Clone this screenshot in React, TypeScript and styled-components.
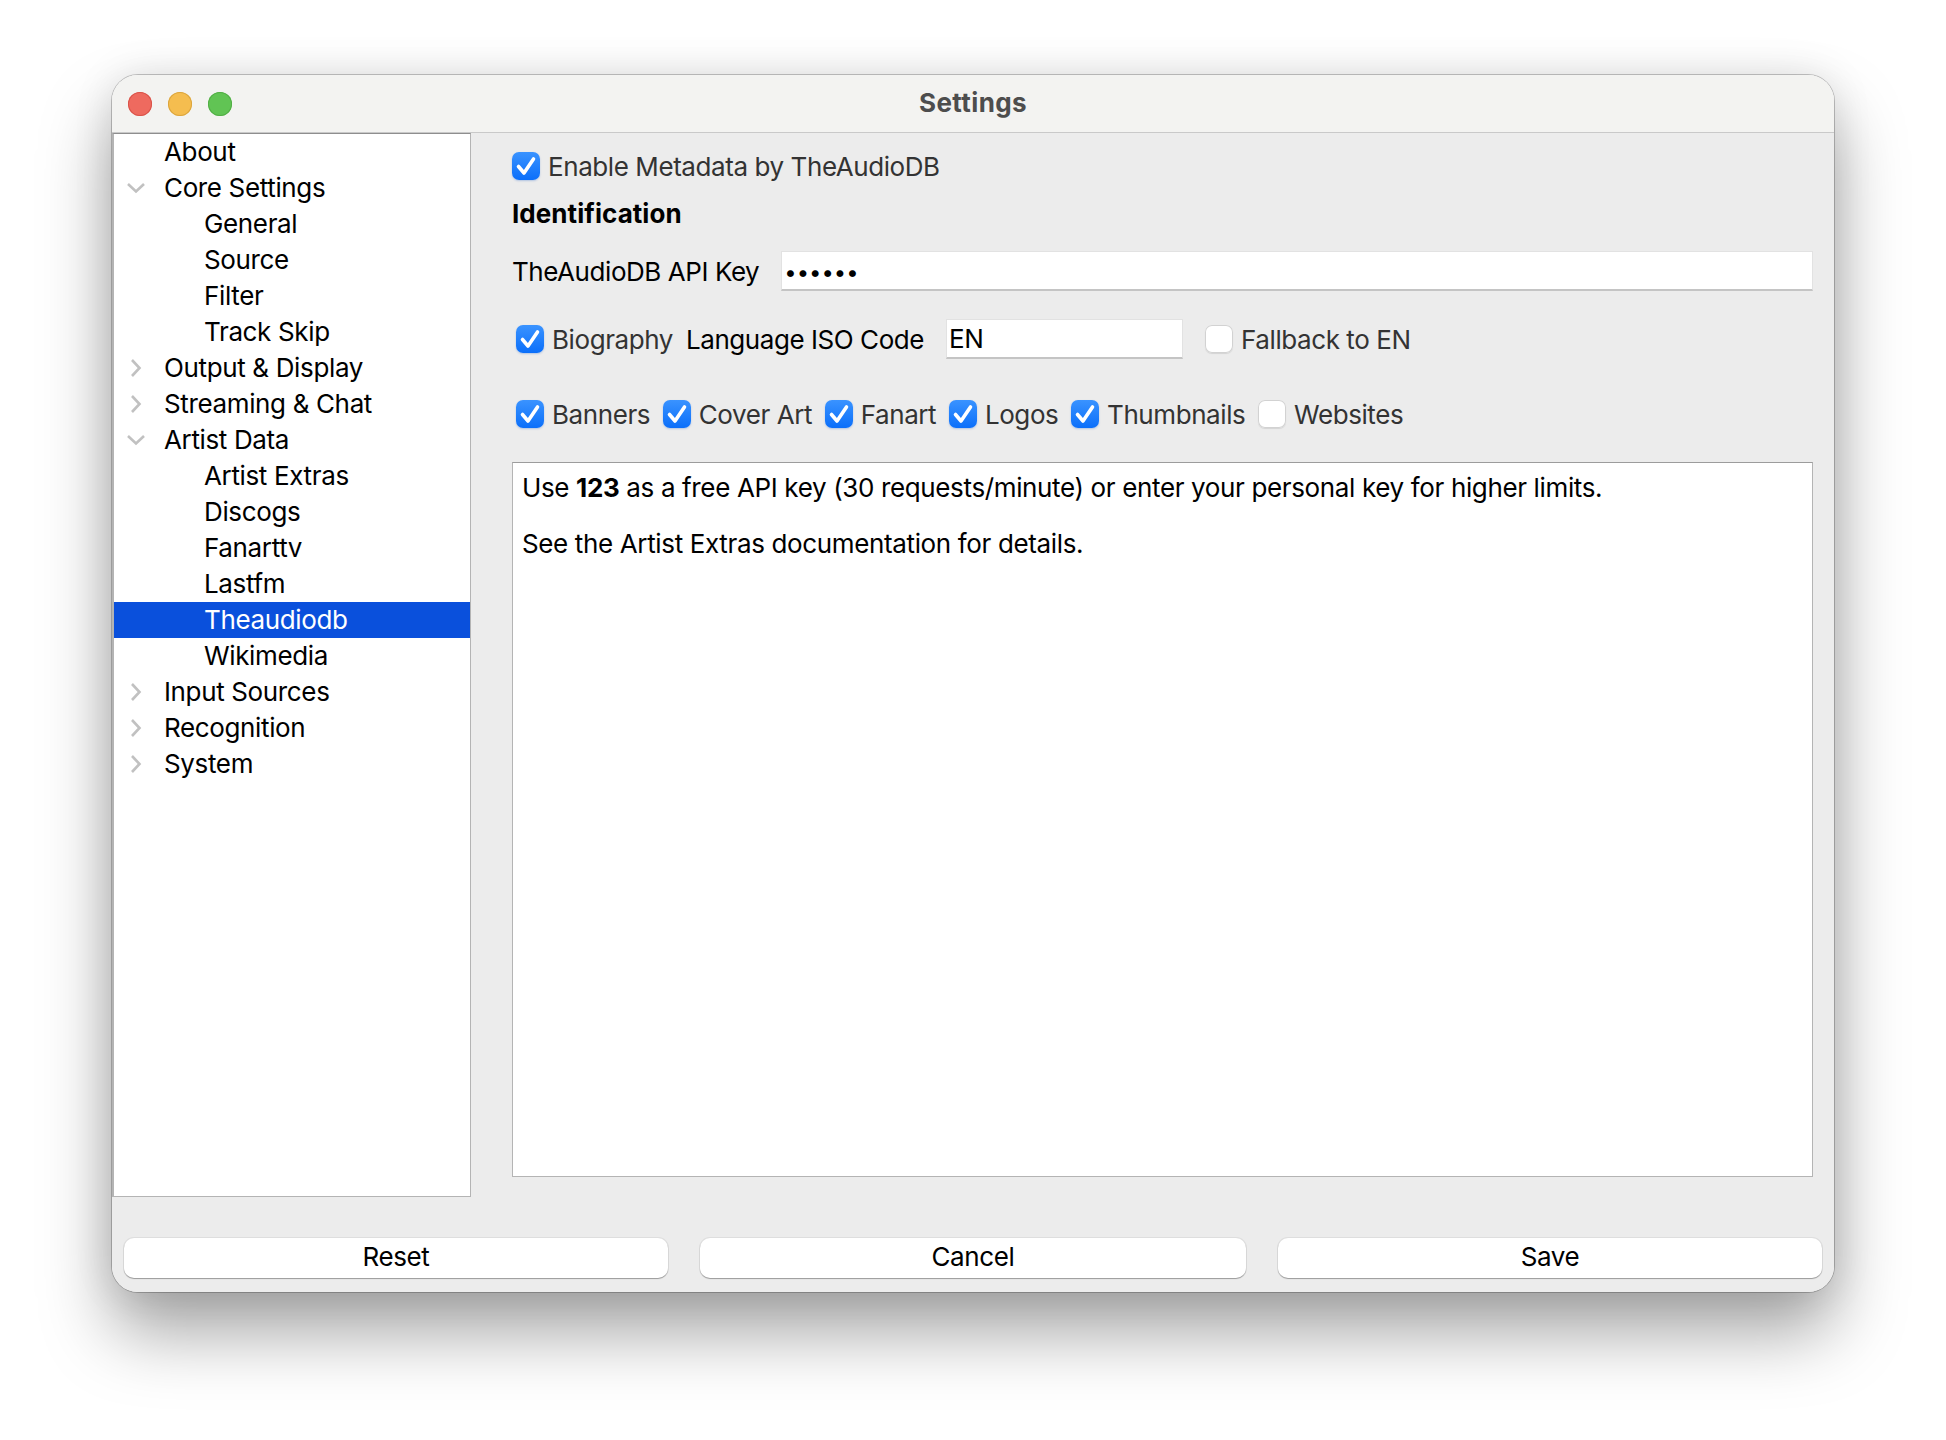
import styled, { createGlobalStyle } from "styled-components";

const GlobalStyle = createGlobalStyle`
  html, body {
    margin: 0;
    padding: 0;
    background: #ffffff;
  }
  body {
    font-family: Inter, "Liberation Sans", sans-serif;
    font-size: 26px;
    color: #000;
  }
`;

const Page = styled.div`
  width: 1946px;
  height: 1440px;
  padding: 75px 0 0 112px;
  box-sizing: border-box;
  overflow: hidden;
`;

const Window = styled.div`
  width: 1722px;
  height: 1217px;
  display: flex;
  flex-direction: column;
  background: #ececec;
  border-radius: 26px;
  box-sizing: border-box;
  overflow: hidden;
`;

const WindowShadow = styled.div`
  width: 1722px;
  height: 1217px;
  border-radius: 26px;
  box-shadow: 0 0 0 1px rgba(0, 0, 0, 0.22), 0 40px 70px rgba(0, 0, 0, 0.36),
    0 0 40px rgba(0, 0, 0, 0.1);
`;

const TitleBar = styled.div`
  height: 57px;
  flex: none;
  display: flex;
  align-items: center;
  position: relative;
  background: #f3f3f1;
  border-bottom: 1px solid #c9c9c9;
  padding-left: 16px;
  gap: 16px;
`;

const Light = styled.span<{ $color: string; $edge: string }>`
  width: 24px;
  height: 24px;
  border-radius: 50%;
  background: ${(p) => p.$color};
  box-shadow: inset 0 0 0 1px ${(p) => p.$edge};
`;

const Title = styled.div`
  position: absolute;
  left: 0;
  right: 0;
  top: 12px;
  text-align: center;
  font-size: 26px;
  line-height: 32px;
  font-weight: 700;
  color: #4d4d4d;
  letter-spacing: 0.4px;
`;

const Main = styled.div`
  display: flex;
  height: 1064px;
  flex: none;
`;

const Tree = styled.div`
  width: 359px;
  flex: none;
  box-sizing: border-box;
  background: #fff;
  border: 1px solid #b4b4b4;
  border-left: 2px solid #b4b4b4;
  border-top: 1px solid #8e8e8e;
`;

const TreeRow = styled.div<{ $depth: number; $selected?: boolean }>`
  height: 36px;
  box-sizing: border-box;
  padding-bottom: 2px;
  display: flex;
  align-items: center;
  position: relative;
  padding-left: ${(p) => (p.$depth === 0 ? 50 : 90)}px;
  background: ${(p) => (p.$selected ? "#0a50dc" : "transparent")};
  color: ${(p) => (p.$selected ? "#fff" : "#000")};
  letter-spacing: -0.36px;
`;

const Arrow = styled.svg`
  position: absolute;
  left: 12px;
  top: 8px;
  width: 20px;
  height: 20px;
  fill: none;
  stroke: #c1c1c1;
  stroke-width: 2.6;
`;

const Panel = styled.div`
  flex: 1;
  padding: 19px 21px 0 41px;
  display: flex;
  flex-direction: column;
  align-items: stretch;
  min-width: 0;
`;

const CheckRow = styled.div`
  display: flex;
  align-items: center;
  height: 28px;
`;

const Heading = styled.div`
  margin-top: 18px;
  height: 32px;
  line-height: 32px;
  font-weight: 700;
  letter-spacing: 0.06px;
`;

const KeyRow = styled.div`
  margin-top: 21px;
  display: flex;
  align-items: center;
  height: 40px;
  gap: 22px;
`;

const Plain = styled.span`
  letter-spacing: -0.44px;
  white-space: nowrap;
`;

const Field = styled.div<{ $width?: number }>`
  flex: ${(p) => (p.$width ? "none" : 1)};
  width: ${(p) => (p.$width ? `${p.$width}px` : "auto")};
  height: 40px;
  box-sizing: border-box;
  background: #fff;
  border-bottom: 2px solid #c4c4c4;
  border-top: 1px solid #e2e2e2;
  border-left: 1px solid #e2e2e2;
  border-right: 1px solid #e2e2e2;
  padding-left: 2px;
  display: flex;
  align-items: center;
  letter-spacing: -0.38px;
`;

const Dots = styled.span`
  font-size: 22px;
  line-height: 1;
  letter-spacing: 0;
  padding-top: 2px;
`;

const LangRow = styled.div`
  margin-top: 28px;
  display: flex;
  align-items: center;
  height: 40px;
  padding-left: 4px;
`;

const LangLabel = styled(Plain)`
  margin: 0 22px 0 13px;
`;

const LangField = styled(Field)`
  margin-right: 22px;
`;

const BoxRow = styled.div`
  margin-top: 41px;
  display: flex;
  align-items: center;
  height: 28px;
  padding-left: 4px;
  gap: 12.7px;
`;

const Check = styled.label`
  display: inline-flex;
  align-items: center;
  gap: 8px;
  color: #333;
  letter-spacing: -0.42px;
  white-space: nowrap;
`;

const Box = styled.span<{ $on?: boolean }>`
  width: 28px;
  height: 28px;
  flex: none;
  box-sizing: border-box;
  border-radius: 7px;
  display: flex;
  align-items: center;
  justify-content: center;
  background: ${(p) =>
    p.$on ? "linear-gradient(#3a93ff, #0b6ffa)" : "#fff"};
  box-shadow: ${(p) =>
    p.$on
      ? "0 1px 2px rgba(0, 80, 200, 0.25)"
      : "inset 0 0 0 1px #d2d2d2, 0 1px 1px rgba(0, 0, 0, 0.1)"};
`;

const Docs = styled.div`
  margin-top: 34px;
  height: 715px;
  box-sizing: border-box;
  background: #fff;
  border: 1px solid #b4b4b4;
  border-top: 1px solid #9c9c9c;
  padding: 9px 9px;
  line-height: 31px;
  letter-spacing: -0.36px;
  p {
    margin: 0 0 25px;
  }
`;

const Footer = styled.div`
  flex: 1;
  display: grid;
  grid-template-columns: 544px 546px 544px;
  column-gap: 32px;
  padding: 41px 12px 0 12px;
`;

const Button = styled.button`
  height: 40px;
  border: none;
  border-radius: 10px;
  background: #fff;
  font: inherit;
  font-size: 26px;
  color: #000;
  letter-spacing: -0.38px;
  padding: 0 0 3px;
  box-shadow: 0 0 0 1px rgba(0, 0, 0, 0.06), 0 1px 1px rgba(0, 0, 0, 0.3);
`;

const Tick = () => (
  <svg width="26" height="26" viewBox="0 0 26 26" fill="none">
    <path d="M5.5 13.5 L11 20 L20.5 6" stroke="#fff" strokeWidth="3.6" strokeLinecap="round" strokeLinejoin="round" />
  </svg>
);

const Option = ({ label, on = true }: { label: string; on?: boolean }) => (
  <Check>
    <Box $on={on}>{on && <Tick />}</Box>
    {label}
  </Check>
);

type Item = { label: string; depth: number; arrow?: "open" | "closed"; selected?: boolean };

const items: Item[] = [
  { label: "About", depth: 0 },
  { label: "Core Settings", depth: 0, arrow: "open" },
  { label: "General", depth: 1 },
  { label: "Source", depth: 1 },
  { label: "Filter", depth: 1 },
  { label: "Track Skip", depth: 1 },
  { label: "Output & Display", depth: 0, arrow: "closed" },
  { label: "Streaming & Chat", depth: 0, arrow: "closed" },
  { label: "Artist Data", depth: 0, arrow: "open" },
  { label: "Artist Extras", depth: 1 },
  { label: "Discogs", depth: 1 },
  { label: "Fanarttv", depth: 1 },
  { label: "Lastfm", depth: 1 },
  { label: "Theaudiodb", depth: 1, selected: true },
  { label: "Wikimedia", depth: 1 },
  { label: "Input Sources", depth: 0, arrow: "closed" },
  { label: "Recognition", depth: 0, arrow: "closed" },
  { label: "System", depth: 0, arrow: "closed" },
];

export default function App() {
  return (
    <>
      <GlobalStyle />
      <Page>
        <WindowShadow>
          <Window>
            <TitleBar>
              <Light $color="#ee6a5f" $edge="#d9534a" />
              <Light $color="#f5bd4f" $edge="#dba53e" />
              <Light $color="#61c454" $edge="#52ae46" />
              <Title>Settings</Title>
            </TitleBar>
            <Main>
              <Tree>
                {items.map((item) => (
                  <TreeRow key={item.label} $depth={item.depth} $selected={item.selected}>
                    {item.arrow === "open" && (
                      <Arrow viewBox="0 0 20 20">
                        <path d="M2 6 L10 13.5 L18 6" />
                      </Arrow>
                    )}
                    {item.arrow === "closed" && (
                      <Arrow viewBox="0 0 20 20">
                        <path d="M6 2 L13.5 10 L6 18" />
                      </Arrow>
                    )}
                    {item.label}
                  </TreeRow>
                ))}
              </Tree>
              <Panel>
                <CheckRow>
                  <Option label="Enable Metadata by TheAudioDB" />
                </CheckRow>
                <Heading>Identification</Heading>
                <KeyRow>
                  <Plain>TheAudioDB API Key</Plain>
                  <Field>
                    <Dots>••••••</Dots>
                  </Field>
                </KeyRow>
                <LangRow>
                  <Option label="Biography" />
                  <LangLabel>Language ISO Code</LangLabel>
                  <LangField $width={237}>EN</LangField>
                  <Option label="Fallback to EN" on={false} />
                </LangRow>
                <BoxRow>
                  <Option label="Banners" />
                  <Option label="Cover Art" />
                  <Option label="Fanart" />
                  <Option label="Logos" />
                  <Option label="Thumbnails" />
                  <Option label="Websites" on={false} />
                </BoxRow>
                <Docs>
                  <p>
                    Use <b>123</b> as a free API key (30 requests/minute) or enter your personal key for higher limits.
                  </p>
                  <p>See the Artist Extras documentation for details.</p>
                </Docs>
              </Panel>
            </Main>
            <Footer>
              <Button>Reset</Button>
              <Button>Cancel</Button>
              <Button>Save</Button>
            </Footer>
          </Window>
        </WindowShadow>
      </Page>
    </>
  );
}
